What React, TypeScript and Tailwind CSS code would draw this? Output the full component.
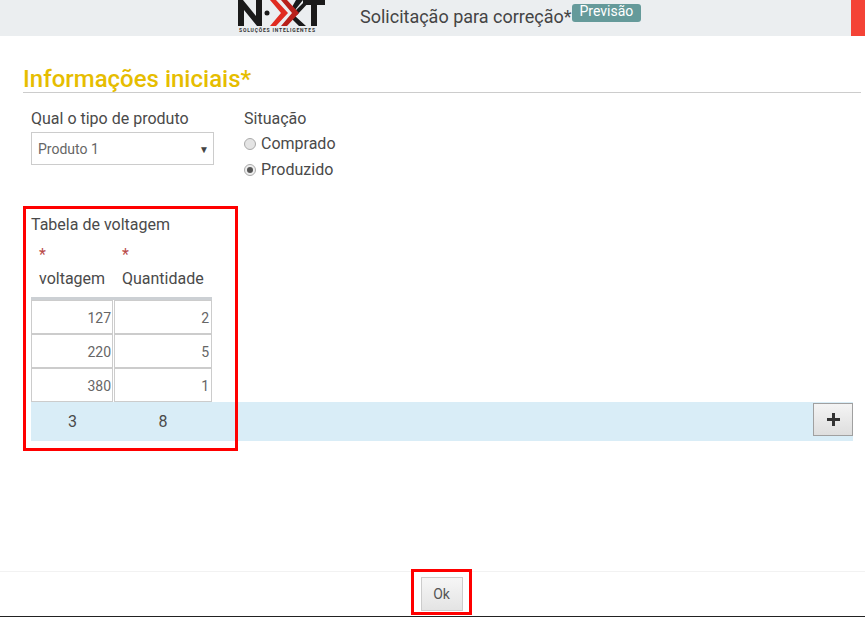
const rows = [
  ['127', '2'],
  ['220', '5'],
  ['380', '1'],
]

function Logo() {
  return (
    <div className="relative h-9 w-[90px] shrink-0">
      <svg width="90" height="27" viewBox="0 0 90 27" className="block">
        <path d="M2 26V0h5l13 16V0h6v26h-5L8 10v16z" fill="#1a1a1a" />
        <circle cx="31" cy="13" r="2.5" fill="#1a1a1a" />
        <path d="M60 0h7l-8 10-3-3zM56 19l3-3 11 10h-7zM70 0h5L61 15l-3-3z" fill="#1a1a1a" />
        <path d="M34 0h6l12 13-12 13h-6l11-13z" fill="#e02b20" />
        <path d="M45 0h6l12 13-12 13h-6l11-13z" fill="#b8201a" />
        <path d="M67 0h22v5h-8v21h-6V5h-8z" fill="#1a1a1a" />
      </svg>
      <span className="absolute left-[3px] top-[28px] whitespace-nowrap text-[5px] font-bold leading-[5px] tracking-[0.8px] text-[#333]">
        SOLUÇÕES INTELIGENTES
      </span>
    </div>
  )
}

export default function App() {
  return (
    <div className="relative flex h-[617px] w-[865px] flex-col overflow-hidden bg-white font-['Roboto',sans-serif] text-[#4a4a4a]">
      <header className="flex h-9 shrink-0 bg-[#ebeef0]">
        <div className="flex flex-1 pl-[236px]">
          <Logo />
          <div className="ml-[34px] flex items-start pt-[6px]">
            <span className="text-[18px] leading-[22px] text-[#444]">Solicitação para correção*</span>
            <span className="mt-[-2px] h-[18px] rounded-[3px] bg-[#659a9a] px-[8px] text-[14px] leading-[15px] text-white">Previsão</span>
          </div>
        </div>
        <div className="w-[14px] bg-[#f44336]" />
      </header>

      <main className="flex-1 pl-[23px] pr-1 pt-[31px]">
        <h2 className="border-b border-[#ccc] text-[24px] font-medium leading-[25px] text-[#e6bd00]">Informações iniciais*</h2>

        <div className="mt-[16px] flex pl-2">
          <div className="w-[213px]">
            <label className="block text-[16px] leading-[20px]">Qual o tipo de produto</label>
            <div className="mt-[3px] flex h-[33px] w-[183px] items-center justify-between border border-[#ccc] pl-[6px] pr-[4px] pt-[1px] text-[14px] text-[#666]">
              <span>Produto 1</span>
              <span className="text-[10px] text-[#444]">▼</span>
            </div>
          </div>
          <div>
            <label className="block text-[16px] leading-[20px]">Situação</label>
            <label className="mt-[5px] flex h-[20px] items-center gap-[5px] text-[16px]">
              <span className="h-3 w-3 rounded-full border border-[#aaa] bg-[#e4e4e4]" />
              Comprado
            </label>
            <label className="mt-[6px] flex h-[20px] items-center gap-[5px] text-[16px]">
              <span className="flex h-3 w-3 items-center justify-center rounded-full border border-[#aaa] bg-[#eee]">
                <span className="h-[6px] w-[6px] rounded-full bg-[#555]" />
              </span>
              Produzido
            </label>
          </div>
        </div>

        <section className="mt-[35px] pl-2 pr-2">
          <div className="text-[16px] leading-[20px]">Tabela de voltagem</div>
          <div className="mt-[10px] flex">
            <div className="w-[83px] pl-2">
              <div className="text-[16px] leading-[20px] text-[#b94a48]">*</div>
              <div className="mt-[4px] text-[16px] leading-[20px]">voltagem</div>
            </div>
            <div className="pl-2">
              <div className="text-[16px] leading-[20px] text-[#b94a48]">*</div>
              <div className="mt-[4px] text-[16px] leading-[20px]">Quantidade</div>
            </div>
          </div>
          <div className="mt-[8px] w-[181px] border-t-[3px] border-[#ccd0d4]">
            {rows.map(([voltage, quantity]) => (
              <div key={voltage} className="flex h-[34px] gap-[1px]">
                <div className="w-[82px] border border-[#ccc] pr-[1px] pt-[7px] text-right text-[14px] leading-[20px] text-[#666]">{voltage}</div>
                <div className="w-[98px] border border-[#ccc] pr-[2px] pt-[7px] text-right text-[14px] leading-[20px] text-[#666]">{quantity}</div>
              </div>
            ))}
          </div>
          <div className="flex h-[39px] items-center bg-[#d9edf7] text-[16px]">
            <span className="w-[83px] text-center">3</span>
            <span className="w-[98px] text-center">8</span>
            <button className="ml-auto flex h-[33px] w-[40px] -translate-y-[2px] items-center justify-center border border-[#a0a0a0] bg-gradient-to-b from-[#f4f4f4] to-[#dedede] text-[#333]">
              <svg width="13" height="13" viewBox="0 0 13 13"><path d="M5 0h3v5h5v3H8v5H5V8H0V5h5z" fill="#333" /></svg>
            </button>
          </div>
        </section>
      </main>

      <footer className="flex h-[45px] shrink-0 items-center justify-center border-t border-[#f2f2f2] pl-[18px]">
        <button className="h-[34px] w-[42px] border border-[#ccc] bg-gradient-to-b from-[#f6f6f6] to-[#e4e4e4] text-[14px] text-[#555]">Ok</button>
      </footer>
      <div className="h-[1px] shrink-0 bg-[#222]" />

      <div className="absolute left-[23px] top-[206px] h-[245px] w-[215px] border-[3px] border-[#f00]" />
      <div className="absolute left-[411px] top-[569px] h-[46px] w-[61px] border-[3px] border-[#f00]" />
    </div>
  )
}
